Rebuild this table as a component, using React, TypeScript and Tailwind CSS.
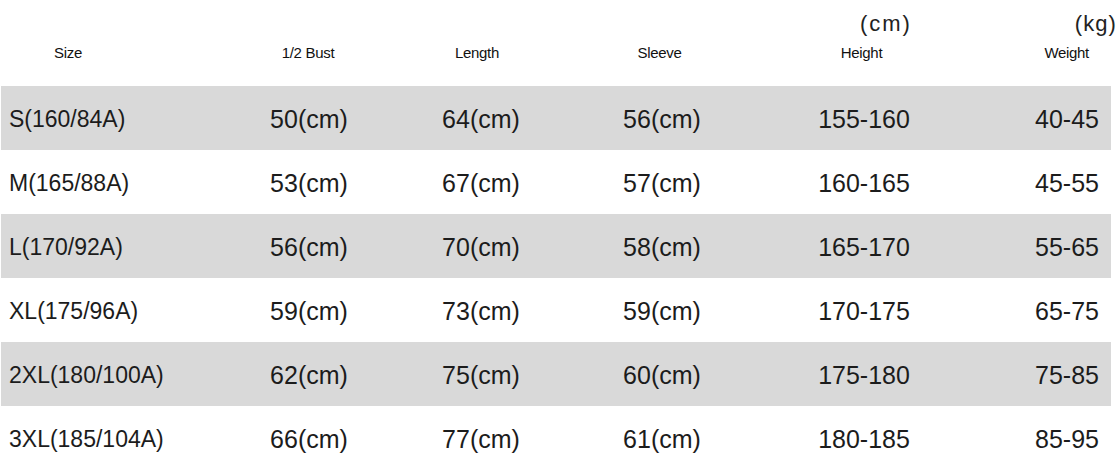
const rows = [
  { size: 'S(160/84A)', bust: '50(cm)', length: '64(cm)', sleeve: '56(cm)', height: '155-160', weight: '40-45' },
  { size: 'M(165/88A)', bust: '53(cm)', length: '67(cm)', sleeve: '57(cm)', height: '160-165', weight: '45-55' },
  { size: 'L(170/92A)', bust: '56(cm)', length: '70(cm)', sleeve: '58(cm)', height: '165-170', weight: '55-65' },
  { size: 'XL(175/96A)', bust: '59(cm)', length: '73(cm)', sleeve: '59(cm)', height: '170-175', weight: '65-75' },
  { size: '2XL(180/100A)', bust: '62(cm)', length: '75(cm)', sleeve: '60(cm)', height: '175-180', weight: '75-85' },
  { size: '3XL(185/104A)', bust: '66(cm)', length: '77(cm)', sleeve: '61(cm)', height: '180-185', weight: '85-95' },
]

const cols = 'grid grid-cols-[230px_156px_188px_174px_230px_1fr]'

export default function App() {
  return (
    <div className="w-[1120px] h-[463px] overflow-hidden bg-white text-[#1c1c1c] font-['Liberation_Sans',Arial,sans-serif]">
      {/* header */}
      <div className={`${cols} h-[86px] items-end pb-[24px] text-[15px] leading-[18px] text-[#111]`}>
        <div className="pl-[54px] tracking-[-0.02em]">Size</div>
        <div className="text-center tracking-[-0.02em]">1/2 Bust</div>
        <div className="text-center pr-[6px] tracking-[-0.02em]">Length</div>
        <div className="text-center pr-[3px] tracking-[-0.02em]">Sleeve</div>
        <div className="flex flex-col items-center pr-[3px]">
          <span className="self-start pl-[112px] mb-[8px] text-[22px] leading-[25px] tracking-[0.09em] text-[#222]">(cm)</span>
          <span className="tracking-[-0.02em]">Height</span>
        </div>
        <div className="flex flex-col items-end">
          <span className="pr-[3px] mb-[8px] text-[22px] leading-[25px] tracking-[0.05em] text-[#222]">(kg)</span>
          <span className="pr-[31px] tracking-[-0.02em]">Weight</span>
        </div>
      </div>

      {/* body */}
      <div className="flex flex-col">
        {rows.map((r, i) => (
          <div
            key={r.size}
            className={`${cols} w-[1110px] h-[64px] items-center pt-[3px] ml-[1px] text-[25px] leading-none ${i % 2 === 0 ? 'bg-[#d9d9d9]' : 'bg-white'}`}
          >
            <div className="pl-[8px] text-[23px]">{r.size}</div>
            <div className="text-center">{r.bust}</div>
            <div className="text-center">{r.length}</div>
            <div className="text-center">{r.sleeve}</div>
            <div className="text-center">{r.height}</div>
            <div className="text-right pr-[12px]">{r.weight}</div>
          </div>
        ))}
      </div>
    </div>
  )
}
